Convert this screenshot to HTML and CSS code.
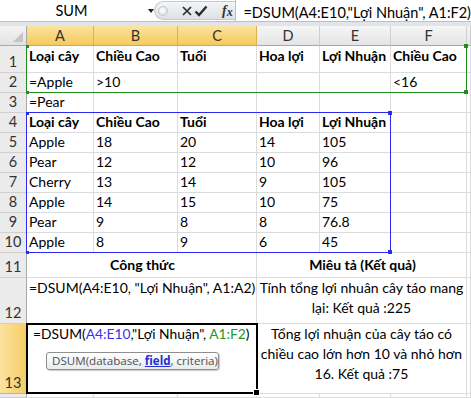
FILE: index.html
```html
<!DOCTYPE html>
<html lang="vi">
<head>
    <meta charset="UTF-8">
    <title>DSUM</title>
    <link rel="stylesheet" href="styles.css">
</head>
<body>
    <div class="bar">
        <div class="namebox"><span class="name">SUM</span><span class="drop"></span></div>
        <div class="buttons">
            <span class="grip"></span>
            <svg class="ico-x" width="10" height="10" viewBox="0 0 10 10"><path d="M1 1 L9 9 M9 1 L1 9" stroke="#2b2b2b" stroke-width="1.7" fill="none"/></svg>
            <svg class="ico-ok" width="14" height="12" viewBox="0 0 14 12"><path d="M1.5 6.5 L5 10 L12.5 1.5" stroke="#2b2b2b" stroke-width="2.4" fill="none"/></svg>
            <span class="fx">f<i>x</i></span>
        </div>
        <div class="formula">=DSUM(A4:E10,"Lợi Nhuận", A1:F2)</div>
    </div>
    <div class="band"></div>

    <div class="sheet">
        <!-- headers -->
        <div class="corner"><span class="tri"></span></div>
        <div class="ch sel">A</div>
        <div class="ch sel">B</div>
        <div class="ch sel">C</div>
        <div class="ch">D</div>
        <div class="ch">E</div>
        <div class="ch">F</div>
        <div class="ch"></div>

        <!-- row 1 -->
        <div class="rh">1</div>
        <div class="c top b">Loại cây</div>
        <div class="c top b">Chiều Cao</div>
        <div class="c top b">Tuổi</div>
        <div class="c top b">Hoa lợi</div>
        <div class="c top b">Lợi Nhuận</div>
        <div class="c top b">Chiều Cao</div>
        <div class="c"></div>

        <!-- row 2 -->
        <div class="rh">2</div>
        <div class="c">=Apple</div>
        <div class="c">&gt;10</div>
        <div class="c"></div>
        <div class="c"></div>
        <div class="c"></div>
        <div class="c">&lt;16</div>
        <div class="c"></div>

        <!-- row 3 -->
        <div class="rh">3</div>
        <div class="c">=Pear</div>
        <div class="c"></div>
        <div class="c"></div>
        <div class="c"></div>
        <div class="c"></div>
        <div class="c"></div>
        <div class="c"></div>

        <!-- row 4 -->
        <div class="rh">4</div>
        <div class="c b">Loại cây</div>
        <div class="c b">Chiều Cao</div>
        <div class="c b">Tuổi</div>
        <div class="c b">Hoa lợi</div>
        <div class="c b">Lợi Nhuận</div>
        <div class="c"></div>
        <div class="c"></div>

        <!-- rows 5-10 -->
        <div class="rh">5</div>
        <div class="c">Apple</div><div class="c">18</div><div class="c">20</div><div class="c">14</div><div class="c">105</div><div class="c"></div><div class="c"></div>
        <div class="rh">6</div>
        <div class="c">Pear</div><div class="c">12</div><div class="c">12</div><div class="c">10</div><div class="c">96</div><div class="c"></div><div class="c"></div>
        <div class="rh">7</div>
        <div class="c">Cherry</div><div class="c">13</div><div class="c">14</div><div class="c">9</div><div class="c">105</div><div class="c"></div><div class="c"></div>
        <div class="rh">8</div>
        <div class="c">Apple</div><div class="c">14</div><div class="c">15</div><div class="c">10</div><div class="c">75</div><div class="c"></div><div class="c"></div>
        <div class="rh">9</div>
        <div class="c">Pear</div><div class="c">9</div><div class="c">8</div><div class="c">8</div><div class="c">76.8</div><div class="c"></div><div class="c"></div>
        <div class="rh">10</div>
        <div class="c">Apple</div><div class="c">8</div><div class="c">9</div><div class="c">6</div><div class="c">45</div><div class="c"></div><div class="c"></div>

        <!-- row 11 -->
        <div class="rh">11</div>
        <div class="c span3 mid b">Công thức</div>
        <div class="c span3 mid b">Miêu tả (Kết quả)</div>
        <div class="c"></div>

        <!-- row 12 -->
        <div class="rh">12</div>
        <div class="c span3 top">=DSUM(A4:E10, "Lợi Nhuận", A1:A2)</div>
        <div class="c span3 wrap"><span>Tính tổng lợi nhuân cây táo mang<br>lại: Kết quả :225</span></div>
        <div class="c"></div>

        <!-- row 13 -->
        <div class="rh sel">13</div>
        <div class="c span3 top edit"><span>=DSUM(<span class="ref-b">A4:E10</span>,"Lợi Nhuận", <span class="ref-g">A1:F2</span>)</span></div>
        <div class="c span3 wrap"><span>Tổng lợi nhuận của cây táo có<br>chiều cao lớn hơn 10 và nhỏ hơn<br>16. Kết quả :75</span></div>
        <div class="c"></div>

        <!-- row 14 -->
        <div class="rh"></div>
        <div class="c"></div><div class="c"></div><div class="c"></div><div class="c"></div><div class="c"></div><div class="c"></div><div class="c"></div>

        <!-- range outlines drawn over the grid -->
        <div class="range green">
            <span class="h tl"></span><span class="h tr"></span><span class="h br"></span><span class="h bl"></span>
        </div>
        <div class="range blue">
            <span class="h tl"></span><span class="h tr"></span><span class="h br"></span><span class="h bl"></span>
        </div>
        <div class="active">
            <span class="fill"></span>
            <div class="tip">DSUM(database, <b>field</b>, criteria)</div>
        </div>
    </div>
</body>
</html>
```

FILE: styles.css
```css
body {
    margin: 0;
    width: 471px;
    height: 398px;
    overflow: hidden;
    background: #fff;
    color: #000;
    font-family: Lato, "Liberation Sans", sans-serif;
    font-size: 14px;
}

/* formula bar */
.bar {
    display: flex;
    height: 21px;
    border-bottom: 1px solid #b9c0c8;
    font-size: 14.5px;
}
.namebox {
    width: 160px;
    display: flex;
    align-items: center;
    line-height: 21px;
}
.name {
    width: 143px;
    text-align: center;
}
.drop {
    margin-left: 5px;
    width: 0;
    height: 0;
    border-left: 3.5px solid transparent;
    border-right: 3.5px solid transparent;
    border-top: 4px solid #222;
}
.buttons {
    width: 86px;
    margin: 1px 0;
    box-sizing: border-box;
    display: flex;
    align-items: center;
    padding-left: 3px;
    background: linear-gradient(#f4f5f7, #dde1e6);
    border: 1px solid #c3c8ce;
    border-right: none;
    border-radius: 10px 0 0 10px;
}
.grip {
    width: 8px;
    height: 8px;
    border-radius: 50%;
    border: 1px solid #c2c6cb;
    background: radial-gradient(circle at 40% 40%, #fff, #d3d7dc);
}
.ico-x {
    margin-left: 14px;
}
.ico-ok {
    margin-left: 2px;
}
.fx {
    margin-left: 14px;
    font-family: "Liberation Serif", serif;
    font-style: italic;
    font-weight: bold;
    font-size: 14px;
    color: #333;
}
.fx i {
    font-size: 12px;
    position: relative;
    top: 1px;
}
.formula {
    flex: 1;
    border-left: 1px solid #b9c0c8;
    padding: 4px 0 0 7px;
    line-height: 17px;
    white-space: nowrap;
}
.band {
    height: 4px;
    background: #e1e5ea;
}

/* sheet grid */
.sheet {
    position: relative;
    display: grid;
    grid-template-columns: 27px 67px 84px 79px 63px 71px 76px 1fr;
    grid-template-rows: 20px 27px repeat(9, 20px) 25px 46px 70px 1fr;
    height: 372px;
    overflow: hidden;
}
.sheet > div {
    box-sizing: border-box;
    min-width: 0;
}
.corner {
    background: linear-gradient(#f4f4f4, #e2e2e2);
    border-right: 1px solid #a9a9a9;
    border-bottom: 1px solid #a9a9a9;
    display: flex;
    justify-content: flex-end;
    align-items: flex-end;
    padding: 0 3px 3px 0;
}
.tri {
    width: 0;
    height: 0;
    border-left: 10px solid transparent;
    border-bottom: 10px solid #c4c4c4;
}
.ch {
    background: linear-gradient(#f6f6f6, #e4e4e4);
    border-right: 1px solid #cfcfcf;
    border-bottom: 1px solid #a9a9a9;
    text-align: center;
    line-height: 19px;
    color: #333;
    font-size: 14.5px;
}
.ch.sel {
    background: linear-gradient(#fbe39f, #f6c95c);
    border-right-color: #e2b14d;
    border-bottom-color: #e5a23b;
}
.rh {
    background: #ebebeb;
    border-right: 1px solid #a9a9a9;
    border-bottom: 1px solid #cfcfcf;
    display: flex;
    justify-content: center;
    align-items: flex-end;
    line-height: 20px;
    color: #333;
    font-size: 14.5px;
}
.rh.sel {
    background: linear-gradient(90deg, #fbe39f, #f6cd66);
    border-bottom-color: #e2b14d;
}
.c {
    border-right: 1px solid #dadcdd;
    border-bottom: 1px solid #dadcdd;
    display: flex;
    align-items: flex-end;
    padding: 0 0 0 2px;
    line-height: 20px;
    white-space: nowrap;
}
.b {
    font-weight: bold;
}
.top {
    align-items: flex-start;
}
.mid {
    align-items: center;
    justify-content: center;
}
.span3 {
    grid-column: span 3;
}
.wrap {
    align-items: flex-start;
    justify-content: center;
    text-align: center;
    padding: 0;
}
.edit {
    padding-left: 6px;
    font-size: 13.8px;
}
.ref-b {
    color: #3535e8;
}
.ref-g {
    color: #24992a;
}

/* reference outlines */
.range {
    position: absolute;
    top: -1px;
    left: -1px;
    right: 0;
    bottom: 0;
    border: 1px solid;
    pointer-events: none;
}
.range.green {
    grid-column: 2 / 8;
    grid-row: 2 / 4;
    border-color: #1e8c1e;
    border-top-color: transparent;
}
.range.blue {
    grid-column: 2 / 7;
    grid-row: 5 / 12;
    border-color: #2a2af2;
}
.h {
    position: absolute;
    width: 4px;
    height: 4px;
}
.green .h {
    background: #1e8c1e;
}
.blue .h {
    background: #2a2af2;
}
.h.tl {
    left: -1px;
    top: -1px;
    width: 3px;
    height: 3px;
}
.h.tr {
    right: -2px;
    top: -2px;
}
.h.br {
    right: -2px;
    bottom: -2px;
}
.h.bl {
    left: -1px;
    bottom: -2px;
    width: 3px;
    height: 3px;
}
.active {
    position: absolute;
    grid-column: 2 / 5;
    grid-row: 14 / 15;
    top: -1px;
    left: -1px;
    right: -1px;
    bottom: 0;
    border: 2px solid #000;
}
.fill {
    position: absolute;
    right: -4px;
    bottom: -4px;
    width: 5px;
    height: 5px;
    background: #000;
    border: 1px solid #fff;
}
.tip {
    position: absolute;
    left: 18px;
    top: 27px;
    width: 173px;
    height: 18px;
    box-sizing: border-box;
    padding-left: 5px;
    border: 1px solid #8f8f8f;
    border-radius: 3px;
    background: linear-gradient(#ffffff, #e8ebef);
    box-shadow: 1px 1px 1px rgba(0, 0, 0, 0.2);
    font-family: "Open Sans", sans-serif;
    font-size: 11.6px;
    line-height: 16px;
    color: #4e4e4e;
    white-space: nowrap;
}
.tip b {
    color: #1f2fd0;
    text-decoration: underline;
}
```
